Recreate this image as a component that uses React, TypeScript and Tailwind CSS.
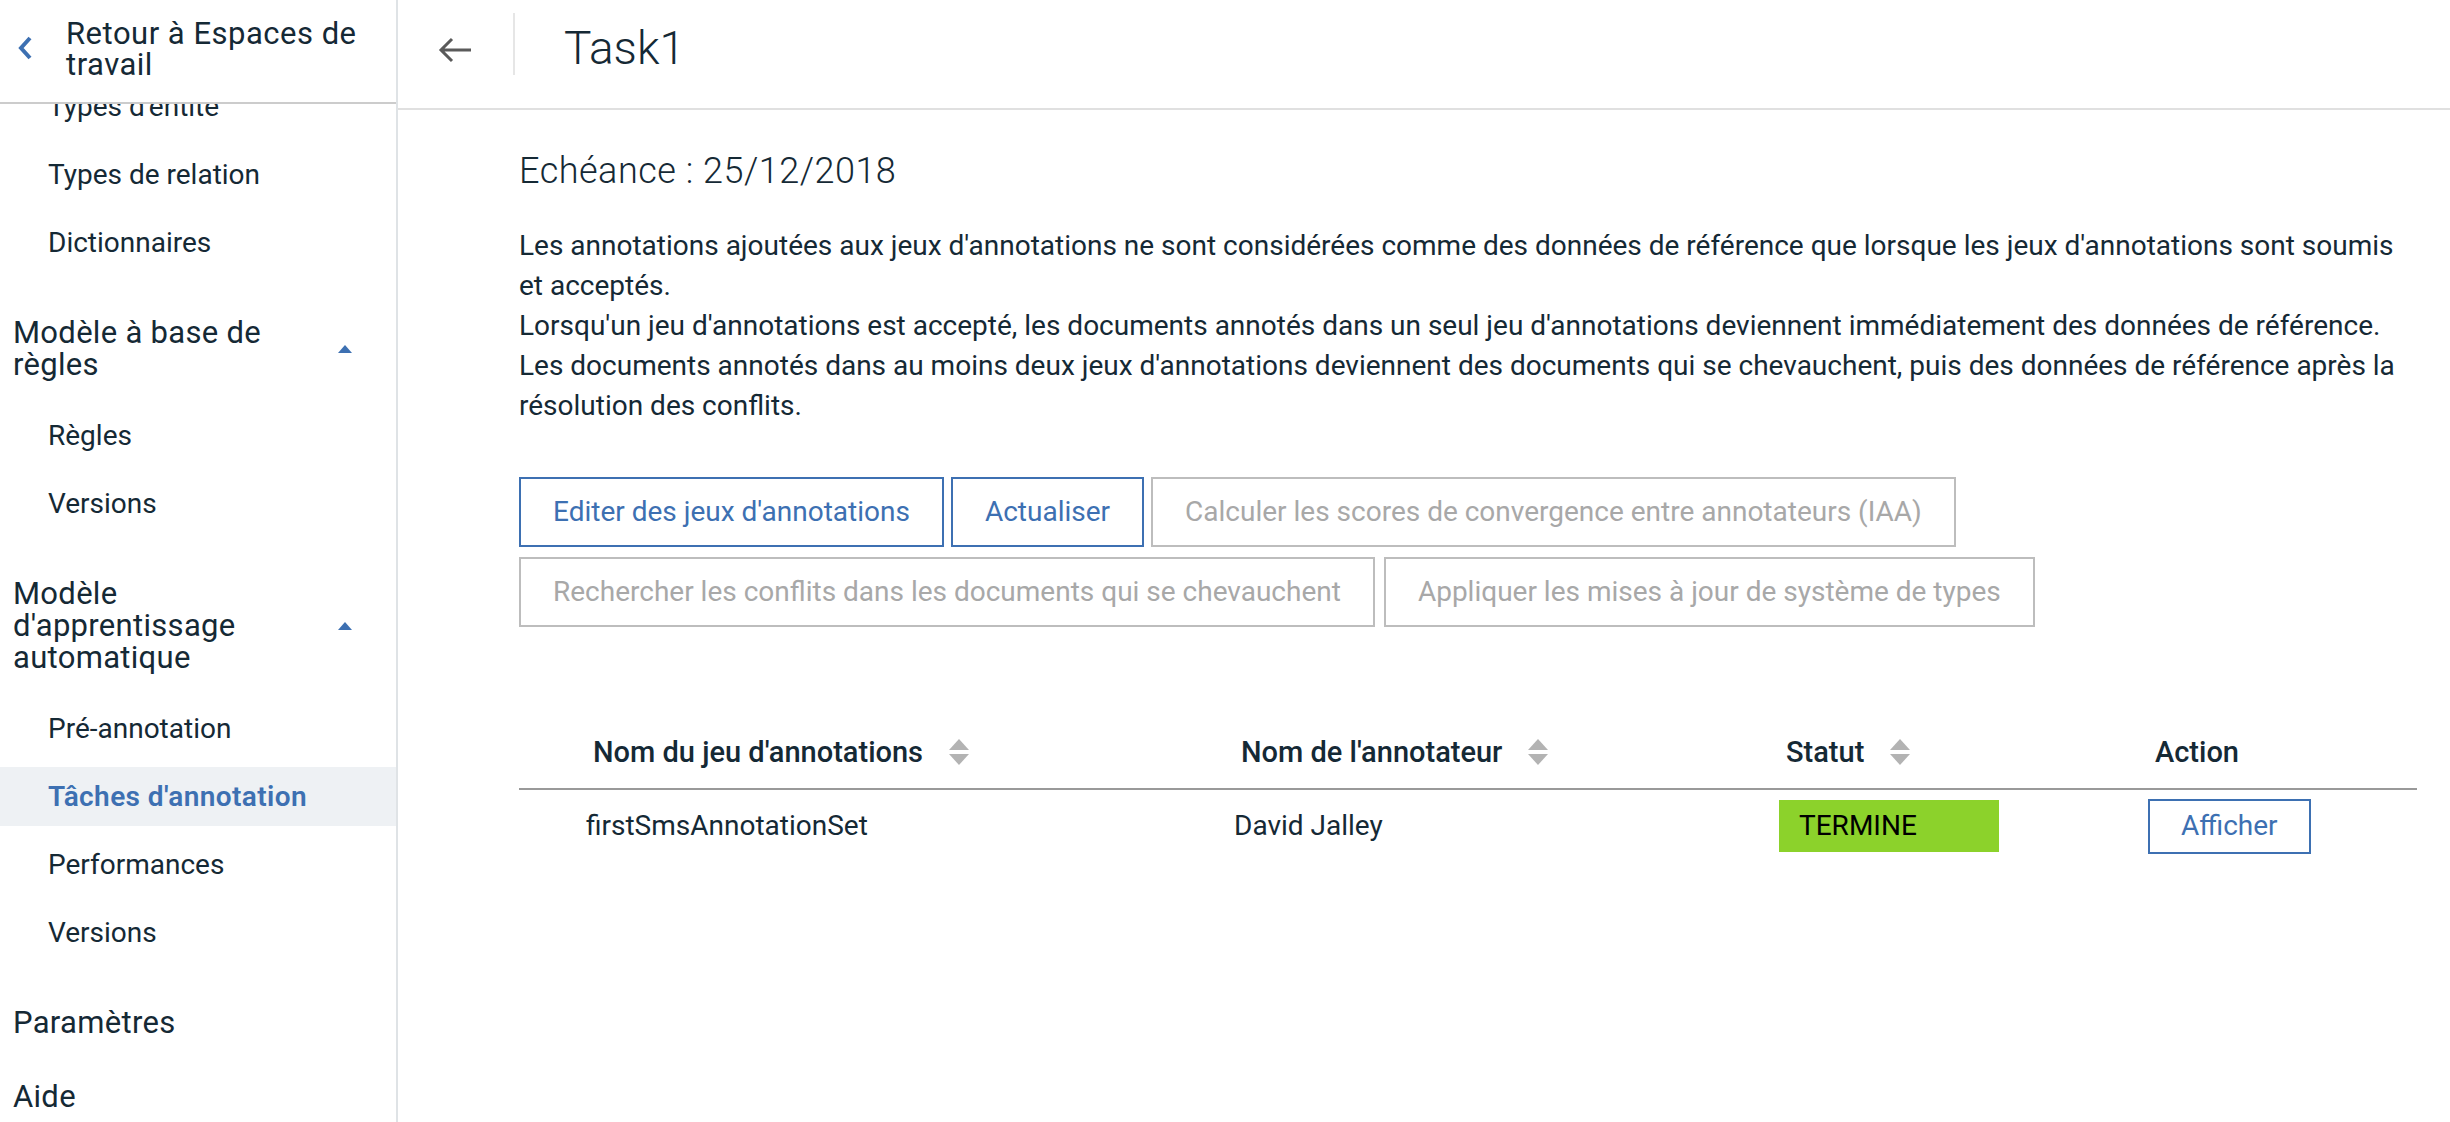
import React from "react";

const SortIcon = () => (
  <svg width="20" height="27" viewBox="0 0 20 27" className="ml-[26px] shrink-0">
    <polygon points="10,0 20,11 0,11" fill="#b3b3b3" />
    <polygon points="0,15 20,15 10,26" fill="#b3b3b3" />
  </svg>
);

const Caret = () => (
  <svg width="14" height="8" viewBox="0 0 14 8" className="absolute right-[44px] top-1/2 -translate-y-1/2">
    <polygon points="7,0 14,8 0,8" fill="#3d70b2" />
  </svg>
);

const SubItem = ({ label, active }: { label: string; active?: boolean }) => (
  <div
    className={
      active
        ? "h-[59px] flex items-center pl-[48px] text-[28px] tracking-[0.4px] bg-[#eef1f4] text-[#3d70b2] font-semibold"
        : "h-[59px] flex items-center pl-[48px] text-[28px] text-[#152935]"
    }
  >
    {label}
  </div>
);

const Section = ({ title, items, activeIndex }: { title: string; items: string[]; activeIndex?: number }) => (
  <div className="mt-[45px]">
    <div className="relative mb-[25px]">
      <div className="pl-[13px] w-[320px] text-[31px] leading-[32px] tracking-[0.3px] text-[#152935]">{title}</div>
      <Caret />
    </div>
    <div className="flex flex-col gap-[9px]">
      {items.map((item, i) => (
        <SubItem key={item + i} label={item} active={i === activeIndex} />
      ))}
    </div>
  </div>
);

const Sidebar = () => {
  return (
    <aside className="w-[398px] h-[1122px] shrink-0 flex flex-col border-r-2 border-[#dfe3e6] overflow-hidden">
      <div className="h-[104px] shrink-0 flex items-center border-b-2 border-[#cccccc]">
        <svg width="16" height="24" viewBox="0 0 16 24" className="ml-[17px] shrink-0 -mt-[6px]">
          <path d="M13 2 L4 12 L13 22" fill="none" stroke="#3d70b2" strokeWidth="4" />
        </svg>
        <span className="ml-[33px] -mt-[4px] w-[320px] text-[31px] leading-[31px] tracking-[0.5px] text-[#152935]">
          Retour à Espaces de travail
        </span>
      </div>
      <div className="flex-1 overflow-hidden">
        <div className="-mt-[27px]">
          <div className="flex flex-col gap-[9px]">
            <SubItem label="Types d'entité" />
            <SubItem label="Types de relation" />
            <SubItem label="Dictionnaires" />
          </div>
          <Section title="Modèle à base de règles" items={["Règles", "Versions"]} />
          <Section
            title="Modèle d'apprentissage automatique"
            items={["Pré-annotation", "Tâches d'annotation", "Performances", "Versions"]}
            activeIndex={1}
          />
          <div className="mt-[45px] pl-[13px] text-[31px] leading-[32px] tracking-[0.3px] text-[#152935]">Paramètres</div>
          <div className="mt-[42px] pl-[13px] text-[31px] leading-[32px] tracking-[0.3px] text-[#152935]">Aide</div>
        </div>
      </div>
    </aside>
  );
};

const ActiveButton = ({ label }: { label: string }) => (
  <button className="h-[70px] px-[32px] border-2 border-[#3d70b2] text-[#3d70b2] text-[28px] bg-white">
    {label}
  </button>
);

const DisabledButton = ({ label }: { label: string }) => (
  <button className="h-[70px] px-[32px] border-2 border-[#bdbdbd] text-[#a8a8a8] text-[28px] bg-white">
    {label}
  </button>
);

const App = () => {
  return (
    <div className="flex w-[2450px] h-[1122px] bg-white overflow-hidden font-['Roboto',sans-serif] text-[#152935]">
      <Sidebar />
      <main className="flex-1 flex flex-col">
        <header className="h-[110px] shrink-0 flex items-start border-b-2 border-[#e0e0e0]">
          <svg width="34" height="28" viewBox="0 0 34 28" className="ml-[40px] mt-[36px] shrink-0">
            <path d="M33 14 H3 M14 3 L3 14 L14 25" fill="none" stroke="#5a5a5a" strokeWidth="3" />
          </svg>
          <div className="ml-[41px] mt-[13px] w-[2px] h-[62px] bg-[#e6e6e6]" />
          <h1 className="ml-[49px] mt-[25px] text-[46px] leading-[46px] font-light text-[#152935]">Task1</h1>
        </header>

        <section className="pl-[121px] pr-[33px]">
          <div className="mt-[43px] text-[36px] leading-[36px] tracking-[0.5px] font-light">Echéance : 25/12/2018</div>

          <div className="mt-[37px] text-[28px] leading-[40px]">
            <p>
              Les annotations ajoutées aux jeux d'annotations ne sont considérées comme des données de référence que
              lorsque les jeux d'annotations sont soumis et acceptés.
            </p>
            <p>
              Lorsqu'un jeu d'annotations est accepté, les documents annotés dans un seul jeu d'annotations deviennent
              immédiatement des données de référence.
            </p>
            <p>
              Les documents annotés dans au moins deux jeux d'annotations deviennent des documents qui se chevauchent,
              puis des données de référence après la résolution des conflits.
            </p>
          </div>

          <div className="mt-[51px] flex flex-col gap-[10px]">
            <div className="flex gap-[7px]">
              <ActiveButton label="Editer des jeux d'annotations" />
              <ActiveButton label="Actualiser" />
              <DisabledButton label="Calculer les scores de convergence entre annotateurs (IAA)" />
            </div>
            <div className="flex gap-[9px]">
              <DisabledButton label="Rechercher les conflits dans les documents qui se chevauchent" />
              <DisabledButton label="Appliquer les mises à jour de système de types" />
            </div>
          </div>

          <div className="mt-[93px]">
            <div className="grid grid-cols-[648px_545px_369px_1fr] h-[70px] items-center border-b-2 border-[#999999] text-[29px] font-medium pb-[3px]">
              <div className="pl-[74px] flex items-center">
                Nom du jeu d'annotations
                <SortIcon />
              </div>
              <div className="pl-[74px] flex items-center">
                Nom de l'annotateur
                <SortIcon />
              </div>
              <div className="pl-[74px] flex items-center">
                Statut
                <SortIcon />
              </div>
              <div className="pl-[74px]">Action</div>
            </div>
            <div className="grid grid-cols-[648px_545px_369px_1fr] h-[72px] items-center text-[28px]">
              <div className="pl-[67px]">firstSmsAnnotationSet</div>
              <div className="pl-[67px]">David Jalley</div>
              <div className="pl-[67px]">
                <div className="w-[220px] h-[52px] bg-[#8cd22b] flex items-center pl-[20px] text-black">TERMINE</div>
              </div>
              <div className="pl-[67px]">
                <button className="h-[55px] px-[31px] border-2 border-[#3d70b2] text-[#3d70b2] text-[28px] bg-white">
                  Afficher
                </button>
              </div>
            </div>
          </div>
        </section>
      </main>
    </div>
  );
};

export default App;
